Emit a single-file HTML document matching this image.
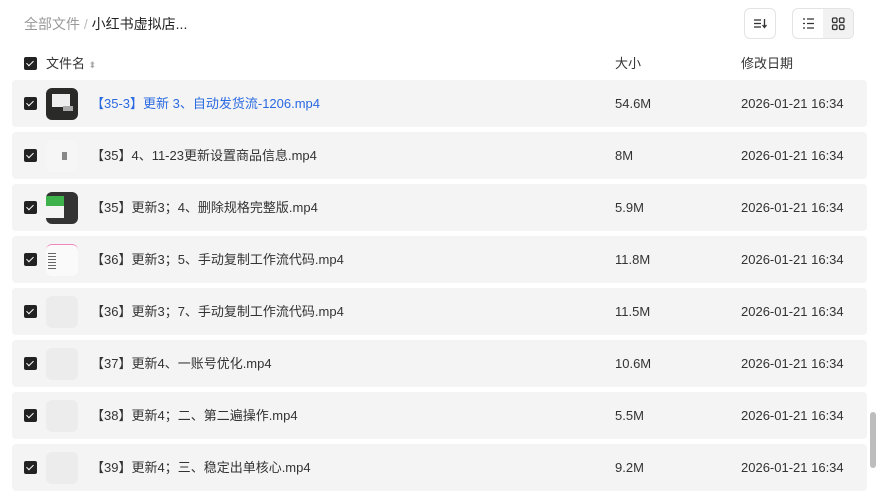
<!DOCTYPE html>
<html><head><meta charset="utf-8"><style>
*{margin:0;padding:0;box-sizing:border-box}
body{width:878px;height:495px;overflow:hidden;background:#fff;font-family:"Liberation Sans","Noto Sans CJK SC",sans-serif;font-size:13px;color:#333;position:relative}
.abs{position:absolute}
.cb{position:absolute;width:13px;height:13px;background:#222;border-radius:2px}
.cb:after{content:"";position:absolute;left:4px;top:2px;width:3px;height:6px;border:solid #fff;border-width:0 1.6px 1.6px 0;transform:rotate(45deg)}
.row{position:absolute;left:12px;width:855px;height:47px;background:#f4f4f5;border-radius:4px;line-height:47px}
.row .cb{left:12px;top:17px}
.th{position:absolute;left:34px;top:8px;width:32px;height:32px;border-radius:6px;background:#ececed;overflow:hidden}
.nm{position:absolute;left:79px;top:0}
.sz{position:absolute;left:603px;top:0}
.dt{position:absolute;left:729px;top:0}
.hd{position:absolute;top:54px;line-height:20px}
</style></head><body>
<div class="abs" style="left:24px;top:14px;font-size:14px;line-height:20px;color:#999">全部文件 <span style="color:#bbb">/</span> <span style="color:#222">小红书虚拟店...</span></div>
<div class="abs" style="left:744px;top:8px;width:32px;height:31px;border:1px solid #e3e3e3;border-radius:6px">
<svg width="30" height="29" viewBox="0 0 30 29"><g stroke="#333" stroke-width="1.3"><line x1="9" y1="11" x2="16" y2="11"/><line x1="9" y1="14.5" x2="16" y2="14.5"/><line x1="9" y1="18" x2="16" y2="18"/><line x1="19.5" y1="10" x2="19.5" y2="18"/><path d="M17.5 16 L19.5 18.5 L21.5 16" fill="none"/></g></svg></div>
<div class="abs" style="left:792px;top:8px;width:62px;height:31px;border:1px solid #e3e3e3;border-radius:6px;overflow:hidden">
<div class="abs" style="left:30px;top:0;width:31px;height:29px;background:#f2f2f2"></div>
<svg class="abs" style="left:0;top:0" width="62" height="29"><g stroke="#333" stroke-width="1.3"><line x1="10" y1="10" x2="12" y2="10"/><line x1="10" y1="14.5" x2="12" y2="14.5"/><line x1="10" y1="19" x2="12" y2="19"/><line x1="14" y1="10" x2="21" y2="10"/><line x1="14" y1="14.5" x2="21" y2="14.5"/><line x1="14" y1="19" x2="21" y2="19"/></g><g fill="none" stroke="#333" stroke-width="1.3"><rect x="39.5" y="9" width="4.5" height="4.5" rx="1.2"/><rect x="46.5" y="9" width="4.5" height="4.5" rx="1.2"/><rect x="39.5" y="16" width="4.5" height="4.5" rx="1.2"/><rect x="46.5" y="16" width="4.5" height="4.5" rx="1.2"/></g></svg></div>
<div class="cb" style="left:24px;top:57px"></div>
<div class="hd" style="left:46px">文件名 <span style="font-size:9px;color:#aaa">⬍</span></div>
<div class="hd" style="left:615px">大小</div>
<div class="hd" style="left:741px">修改日期</div>

<div class="row" style="top:80px"><div class="cb"></div><div class="th" style="background:#2a2a28"><div class="abs" style="left:6px;top:6px;width:18px;height:13px;background:#eee"></div><div class="abs" style="left:17px;top:18px;width:10px;height:5px;background:#aaa"></div></div><div class="nm" style="color:#2a6ae0">【35-3】更新 3、自动发货流-1206.mp4</div><div class="sz">54.6M</div><div class="dt">2026-01-21 16:34</div></div>
<div class="row" style="top:132px"><div class="cb"></div><div class="th" style="background:#f6f6f6"><div class="abs" style="left:16px;top:12px;width:5px;height:8px;background:#888"></div></div><div class="nm">【35】4、11-23更新设置商品信息.mp4</div><div class="sz">8M</div><div class="dt">2026-01-21 16:34</div></div>
<div class="row" style="top:184px"><div class="cb"></div><div class="th" style="background:#333"><div class="abs" style="left:0;top:4px;width:18px;height:10px;background:#3db24a"></div><div class="abs" style="left:0;top:14px;width:18px;height:12px;background:#f4f4f4"></div></div><div class="nm">【35】更新3；4、删除规格完整版.mp4</div><div class="sz">5.9M</div><div class="dt">2026-01-21 16:34</div></div>
<div class="row" style="top:236px"><div class="cb"></div><div class="th" style="background:#fafafa;border-top:1px solid #e8b"><div class="abs" style="left:2px;top:8px;width:8px;height:18px;background:repeating-linear-gradient(#666 0 1px,transparent 1px 3px)"></div></div><div class="nm">【36】更新3；5、手动复制工作流代码.mp4</div><div class="sz">11.8M</div><div class="dt">2026-01-21 16:34</div></div>
<div class="row" style="top:288px"><div class="cb"></div><div class="th"></div><div class="nm">【36】更新3；7、手动复制工作流代码.mp4</div><div class="sz">11.5M</div><div class="dt">2026-01-21 16:34</div></div>
<div class="row" style="top:340px"><div class="cb"></div><div class="th"></div><div class="nm">【37】更新4、一账号优化.mp4</div><div class="sz">10.6M</div><div class="dt">2026-01-21 16:34</div></div>
<div class="row" style="top:392px"><div class="cb"></div><div class="th"></div><div class="nm">【38】更新4；二、第二遍操作.mp4</div><div class="sz">5.5M</div><div class="dt">2026-01-21 16:34</div></div>
<div class="row" style="top:444px"><div class="cb"></div><div class="th"></div><div class="nm">【39】更新4；三、稳定出单核心.mp4</div><div class="sz">9.2M</div><div class="dt">2026-01-21 16:34</div></div>
<div class="abs" style="left:870px;top:412px;width:6px;height:56px;background:#bdbdbd;border-radius:3px"></div>
</body></html>
